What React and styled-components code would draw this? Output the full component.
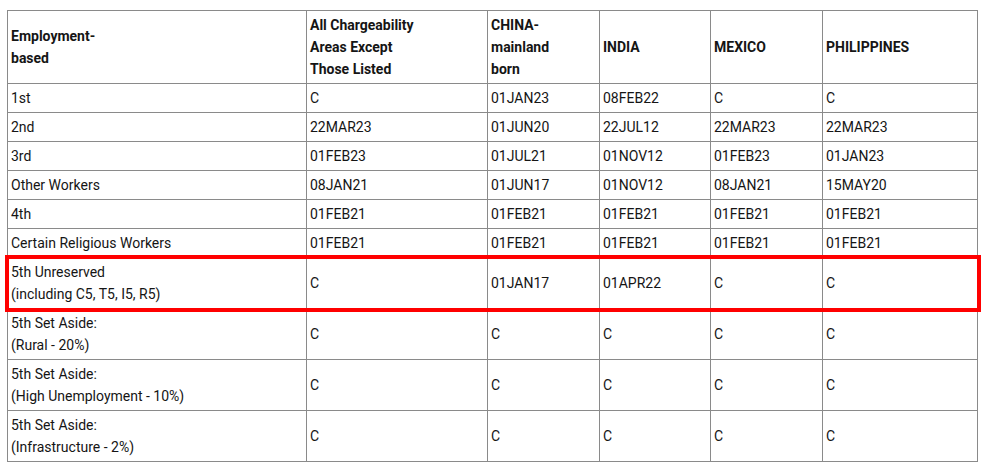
import styled, { createGlobalStyle } from "styled-components";

const GlobalStyle = createGlobalStyle`
  body {
    margin: 0;
    background: #fff;
    font-family: Roboto, "Liberation Sans", Arial, sans-serif;
    color: #151515;
  }
`;

const Page = styled.div`
  padding: 10px 0 0 7px;
`;

const Table = styled.table`
  border-collapse: collapse;
  width: 970px;
  table-layout: fixed;
  font-size: 14px;
  line-height: 22px;
`;

const Head = styled.th`
  border: 1px solid #8a8a8a;
  padding: 3px 3px;
  text-align: left;
  vertical-align: middle;
  font-weight: 700;
  height: 66px;
`;

const Cell = styled.td`
  border: 1px solid #8a8a8a;
  padding: 3px 3px;
  text-align: left;
  vertical-align: middle;
  font-weight: 400;
`;

const Row = styled.tr`
  outline: ${(p) => (p.$marked ? "4px solid #ff0000" : "none")};
  outline-offset: -1px;
`;

const columns = [
  { label: ["Employment-", "based"], width: 299 },
  { label: ["All Chargeability", "Areas Except", "Those Listed"], width: 181 },
  { label: ["CHINA-", "mainland", "born"], width: 112 },
  { label: ["INDIA"], width: 111 },
  { label: ["MEXICO"], width: 112 },
  { label: ["PHILIPPINES"], width: 155 },
];

const rows = [
  { name: ["1st"], dates: ["C", "01JAN23", "08FEB22", "C", "C"] },
  { name: ["2nd"], dates: ["22MAR23", "01JUN20", "22JUL12", "22MAR23", "22MAR23"] },
  { name: ["3rd"], dates: ["01FEB23", "01JUL21", "01NOV12", "01FEB23", "01JAN23"] },
  { name: ["Other Workers"], dates: ["08JAN21", "01JUN17", "01NOV12", "08JAN21", "15MAY20"] },
  { name: ["4th"], dates: ["01FEB21", "01FEB21", "01FEB21", "01FEB21", "01FEB21"] },
  { name: ["Certain Religious Workers"], dates: ["01FEB21", "01FEB21", "01FEB21", "01FEB21", "01FEB21"] },
  { name: ["5th Unreserved", "(including C5, T5, I5, R5)"], dates: ["C", "01JAN17", "01APR22", "C", "C"], marked: true },
  { name: ["5th Set Aside:", "(Rural - 20%)"], dates: ["C", "C", "C", "C", "C"] },
  { name: ["5th Set Aside:", "(High Unemployment - 10%)"], dates: ["C", "C", "C", "C", "C"] },
  { name: ["5th Set Aside:", "(Infrastructure - 2%)"], dates: ["C", "C", "C", "C", "C"] },
];

const Lines = ({ parts }) =>
  parts.map((t, i) => (
    <span key={i}>
      {i > 0 && <br />}
      {t}
    </span>
  ));

const App = () => {
  return (
    <Page>
      <GlobalStyle />
      <Table>
        <colgroup>
          {columns.map((c, i) => (
            <col key={i} style={{ width: c.width }} />
          ))}
        </colgroup>
        <thead>
          <tr>
            {columns.map((c, i) => (
              <Head key={i}>
                <Lines parts={c.label} />
              </Head>
            ))}
          </tr>
        </thead>
        <tbody>
          {rows.map((r, i) => (
            <Row key={i} $marked={r.marked}>
              <Cell>
                <Lines parts={r.name} />
              </Cell>
              {r.dates.map((d, j) => (
                <Cell key={j}>{d}</Cell>
              ))}
            </Row>
          ))}
        </tbody>
      </Table>
    </Page>
  );
};

export default App;
